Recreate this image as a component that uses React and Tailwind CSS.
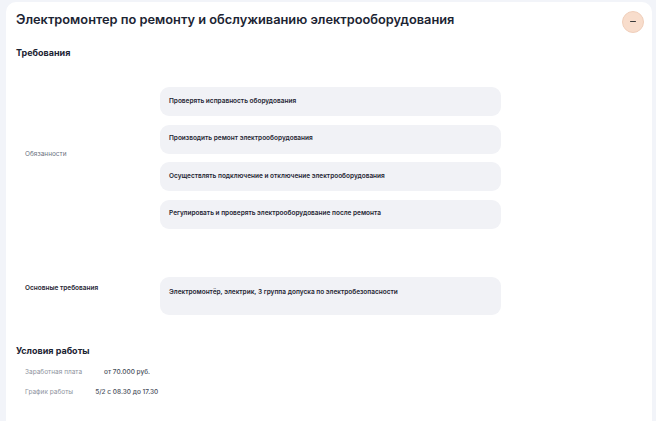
import React from "react";

const duties = [
  "Проверять исправность оборудования",
  "Производить ремонт электрооборудования",
  "Осуществлять подключение и отключение электрооборудования",
  "Регулировать и проверять электрооборудование после ремонта",
];

function Chip({ children, className = "" }) {
  return (
    <div
      className={
        "rounded-[9px] bg-[#f1f2f6] px-[9px] text-[6.5px] font-semibold text-[#1f2633] " +
        className
      }
    >
      {children}
    </div>
  );
}

export default function App() {
  return (
    <div className="min-h-screen bg-[#f2f4f9] pt-[2px] pl-[6px] pr-[4px] font-['Inter',sans-serif]">
      <div className="min-h-[419px] rounded-t-[10px] bg-white pl-[10px] pr-[8px]">
        {/* header */}
        <div className="flex h-[36px] items-center justify-between">
          <h1 className="text-[12.8px] font-semibold text-[#1c2433]">
            Электромонтер по ремонту и обслуживанию электрооборудования
          </h1>
          <button className="mt-[3px] flex h-[22px] w-[22px] items-center justify-center rounded-full border border-[#f0cfbb] bg-[#f8ddcc]">
            <span className="block h-[1.5px] w-[6px] rounded bg-[#3a3a3a]" />
          </button>
        </div>

        <h2 className="mt-[9px] text-[9px] leading-[12px] font-bold text-[#1c2433]">
          Требования
        </h2>

        {/* duties */}
        <div className="mt-[28px] flex pl-[9px]">
          <div className="flex w-[135px] items-center pb-[6px] text-[6.5px] text-[#6b7280]">
            Обязанности
          </div>
          <div className="flex w-[341px] flex-col gap-[8.5px]">
            {duties.map((d) => (
              <Chip key={d} className="flex h-[29px] items-center">
                {d}
              </Chip>
            ))}
          </div>
        </div>

        {/* basic requirements */}
        <div className="mt-[48px] flex pl-[9px]">
          <div className="w-[135px] pt-[7px] text-[6.5px] font-semibold text-[#1f2633]">
            Основные требования
          </div>
          <Chip className="h-[38px] w-[341px] pt-[11px]">
            Электромонтёр, электрик, 3 группа допуска по электробезопасности
          </Chip>
        </div>

        <h2 className="mt-[30px] text-[9px] leading-[12px] font-bold text-[#1c2433]">
          Условия работы
        </h2>

        <div className="mt-[11.5px] flex flex-col gap-[12px] pl-[9px] text-[6.5px] leading-[8px]">
          <div className="flex">
            <span className="text-[#8e939e]">Заработная плата</span>
            <span className="ml-[22px] font-medium text-[#4a505c]">от 70.000 руб.</span>
          </div>
          <div className="flex">
            <span className="text-[#8e939e]">График работы</span>
            <span className="ml-[22px] font-medium text-[#4a505c]">5/2 с 08.30 до 17.30</span>
          </div>
        </div>
      </div>
    </div>
  );
}
